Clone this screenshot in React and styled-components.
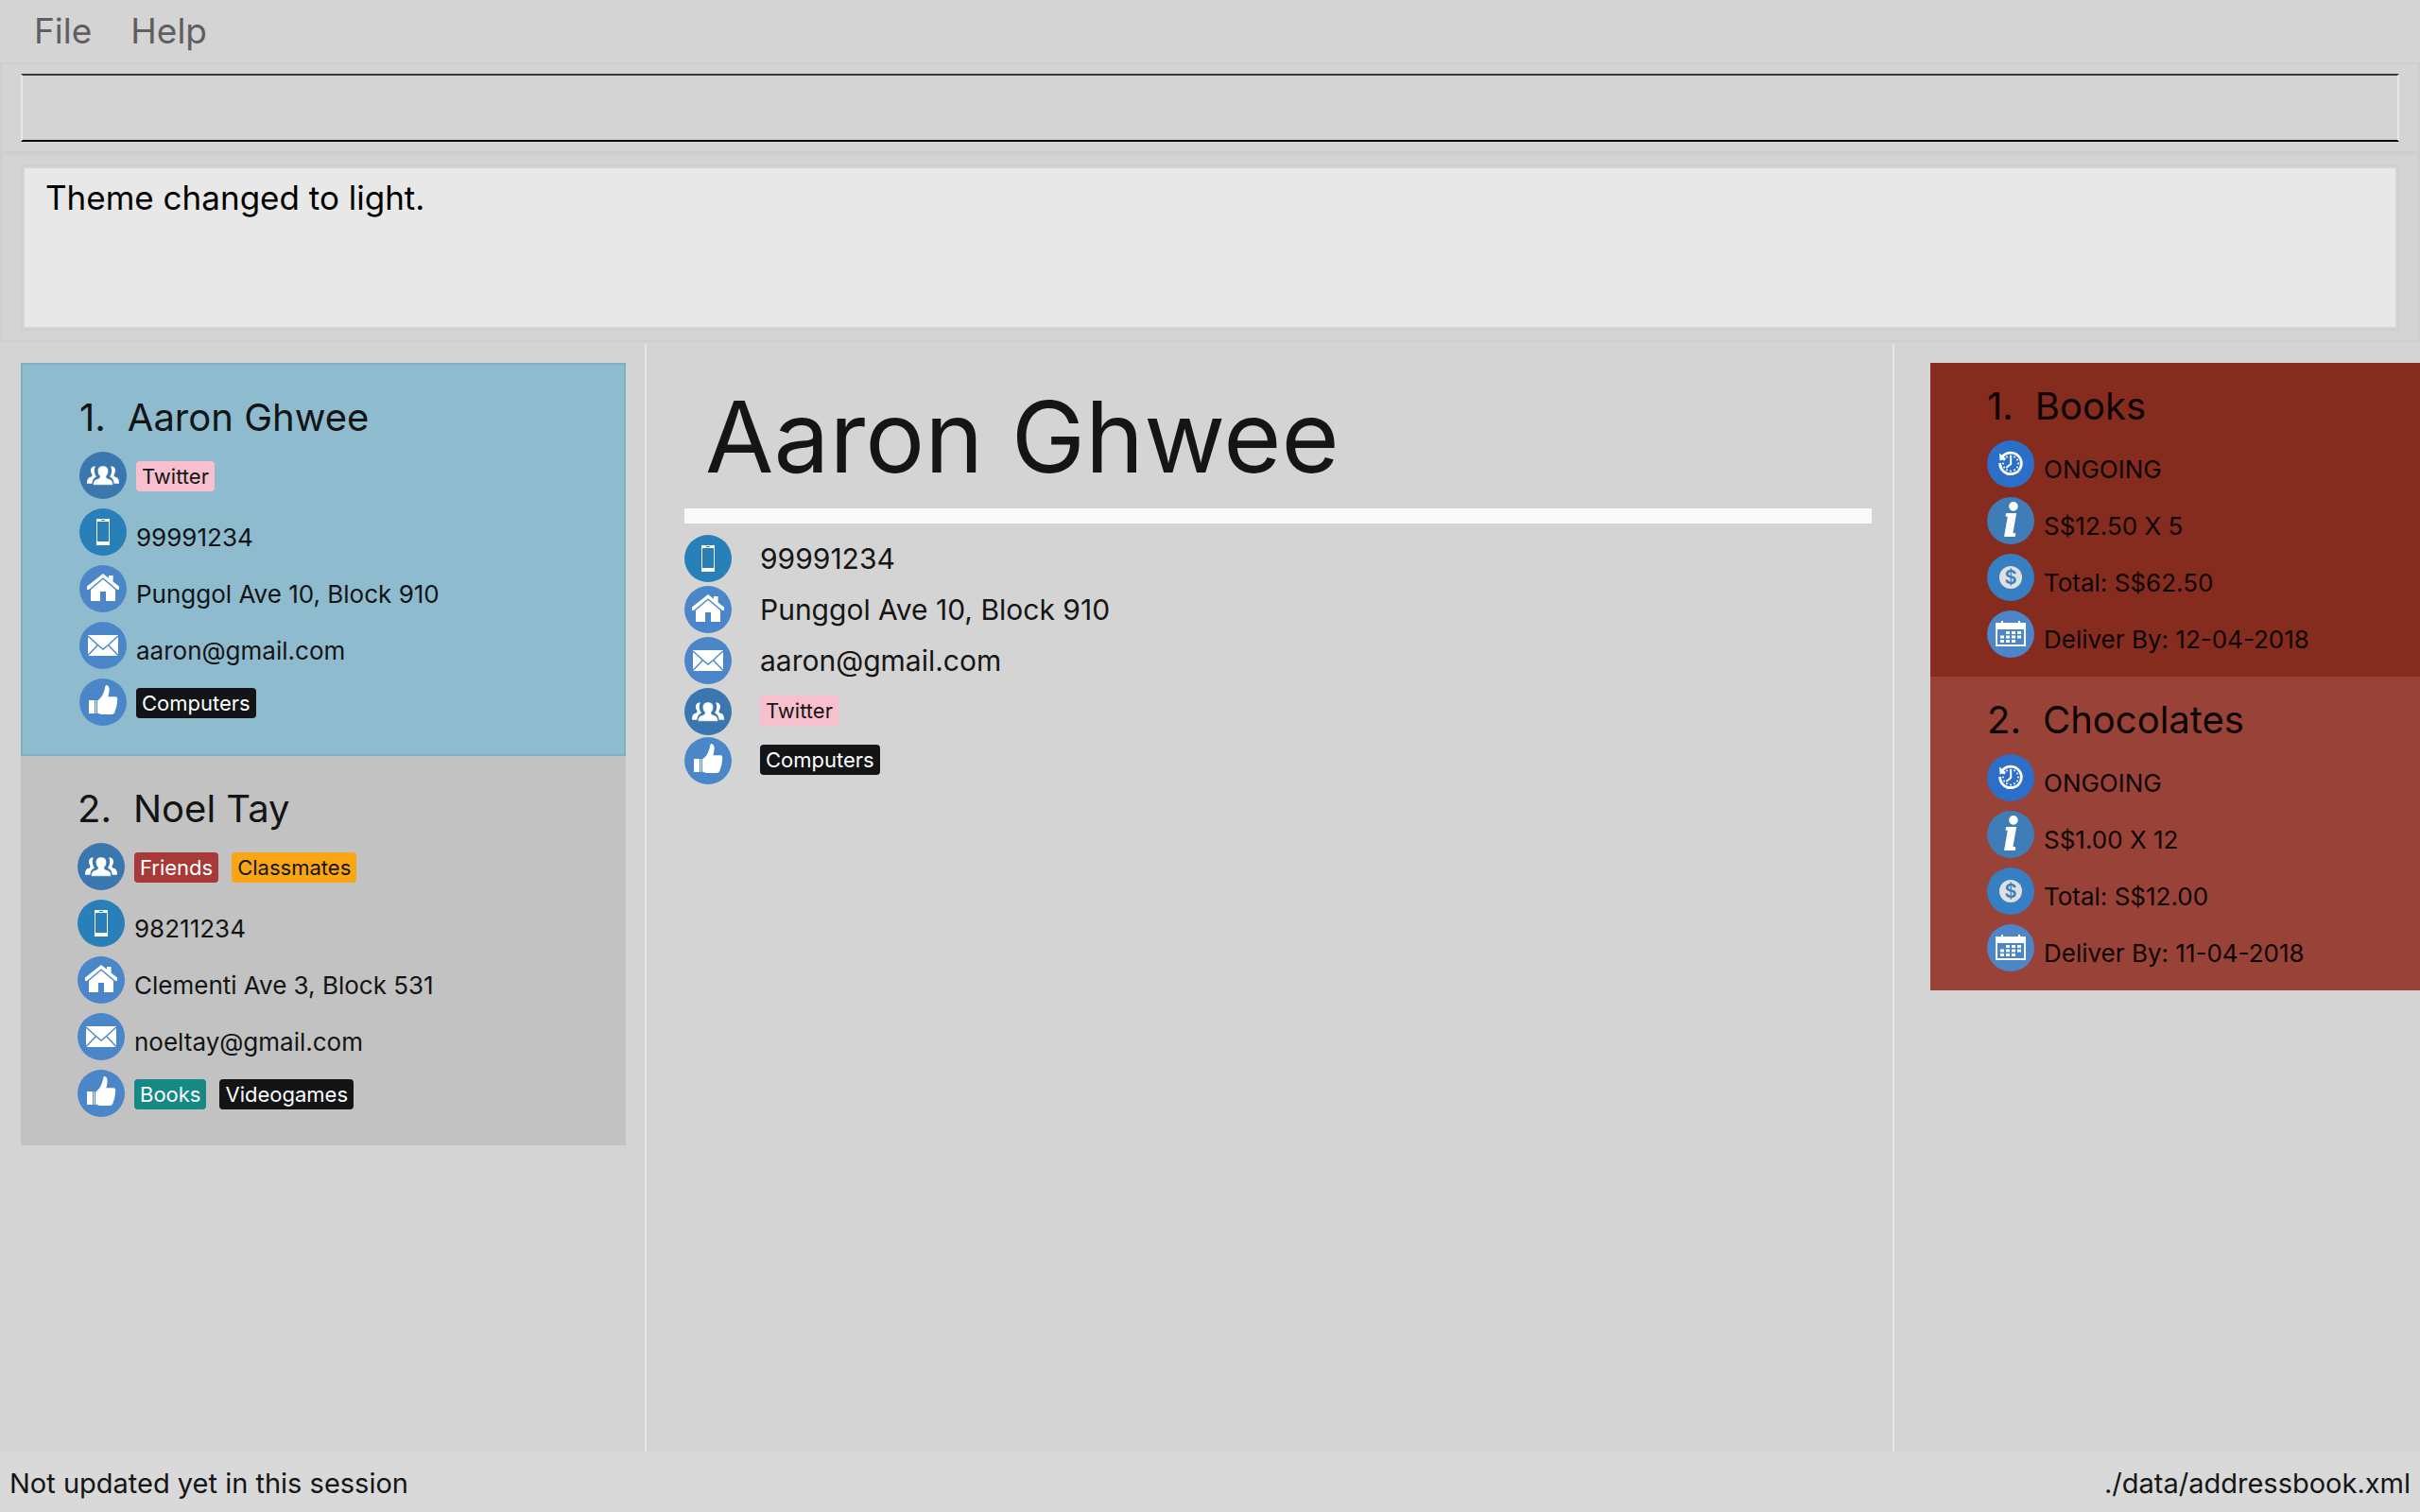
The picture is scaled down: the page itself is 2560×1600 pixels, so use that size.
import React from "react";
import styled, { createGlobalStyle } from "styled-components";

const GlobalStyle = createGlobalStyle`
  *, *::before, *::after { box-sizing: border-box; }
  body {
    margin: 0;
    background: #d4d4d4;
    color: #151515;
    font-family: Inter, "Liberation Sans", sans-serif;
  }
  button, input, textarea { font-family: inherit; }
`;

const Window = styled.div`
  display: flex;
  flex-direction: column;
  min-height: 100vh;
`;

const MenuBar = styled.nav`
  display: flex;
  gap: 41px;
  padding: 0 36px;
`;

const MenuButton = styled.button`
  padding: 0;
  border: 0;
  background: none;
  color: #5f5f5f;
  font-size: 37px;
  line-height: 66px;
`;

const Pane = styled.section`
  display: flex;
  padding: 10px 20px;
  border: 2px solid #cfcfcf;
`;

const CommandInput = styled.input`
  flex: 1;
  min-width: 0;
  height: 72px;
  padding: 0 24px;
  border: 2px solid;
  border-color: #383838 #e8e8e8 #000 #e8e8e8;
  border-radius: 0;
  outline: 0;
  background: transparent;
  font-size: 35px;
`;

const ResultBox = styled.textarea`
  flex: 1;
  min-width: 0;
  height: 176px;
  padding: 12px 24px;
  border: 2px solid #cfcfcf;
  outline: 2px solid #d4d4d4;
  outline-offset: -4px;
  border-radius: 0;
  resize: none;
  background: #e8e8e8;
  color: #000;
  font-size: 35px;
  line-height: 42px;
`;

const Main = styled.main`
  flex: 1;
  display: grid;
  grid-template-columns: minmax(0, 682fr) 2px minmax(0, 1318fr) 2px minmax(0, 556fr);
  padding-top: 2px;
`;

const Divider = styled.div`
  background: #e8e8e8;
`;

const List = styled.ul`
  margin: 0;
  padding: ${(p) => (p.$flushRight ? "20px 0 20px 38px" : "20px 20px 20px 22px")};
  list-style: none;
`;

const cardTones = {
  selected: "#8ebbce",
  plain: "#c2c2c2",
  redDark: "#852c1f",
  red: "#994237",
};

const Card = styled.li`
  display: flex;
  flex-direction: column;
  gap: 10px;
  padding: ${(p) => (p.$compact ? "20px 60px" : "30px 60px")};
  border: ${(p) => (p.$tone === "selected" ? "2px solid #80afc4" : "0")};
  background: ${(p) => cardTones[p.$tone]};
  color: ${(p) => (p.$compact ? "#0d0504" : "#121415")};
`;

const CardTitle = styled.h2`
  display: flex;
  gap: 23px;
  margin: 0;
  font-size: 40px;
  font-weight: 400;
  line-height: 52px;
  white-space: nowrap;
`;

const Fields = styled.div`
  display: flex;
  flex-direction: column;
  gap: ${(p) => p.$gap}px;
`;

const Field = styled.div`
  display: flex;
  align-items: ${(p) => (p.$wide ? "center" : "flex-end")};
  gap: ${(p) => (p.$wide ? 30 : 10)}px;
  font-size: ${(p) => (p.$wide ? 30 : 26)}px;
  line-height: 38px;
  white-space: nowrap;
`;

const Tags = styled.div`
  display: flex;
  gap: 14px;
  padding-bottom: ${(p) => (p.$wide ? 2 : 8)}px;
`;

const tagTones = {
  pink: ["#f8c0cc", "#151515"],
  black: ["#121415", "#fff"],
  red: ["#a83939", "#fff"],
  orange: ["#faa614", "#151515"],
  teal: ["#158984", "#fff"],
};

const Tag = styled.span`
  padding: 0 6px;
  border-radius: 4px;
  background: ${(p) => tagTones[p.$tone][0]};
  color: ${(p) => tagTones[p.$tone][1]};
  font-size: 22px;
  line-height: 32px;
`;

const Details = styled.article`
  padding: 38px 22px 20px 40px;
`;

const DetailsName = styled.h1`
  margin: 0;
  padding: 0 22px;
  font-size: 105px;
  font-weight: 400;
  line-height: 120px;
`;

const Rule = styled.hr`
  height: 16px;
  margin: 16px 0 12px;
  border: 0;
  background: #f9f9f9;
`;

const StatusBar = styled.footer`
  display: flex;
  justify-content: space-between;
  padding: 14px 10px 10px;
  background: #d9d9d9;
  font-size: 29px;
  line-height: 40px;
`;

const IconSvg = styled.svg`
  flex: none;
  width: 50px;
  height: 50px;
  overflow: visible;
`;

const InfoMark = styled.text`
  font-family: "Liberation Serif", serif;
  font-size: 50px;
  font-weight: 700;
  font-style: italic;
  stroke: #fff;
  stroke-width: 2px;
`;

const DollarMark = styled.text`
  font-size: 20px;
  font-weight: 600;
`;

const ticks = Array.from({ length: 12 }, (_, i) => (i * Math.PI) / 6);

const icons = {
  group: {
    disc: "#3b77af",
    art: (
      <>
        <path d="M17 15.6c-3-.6-5 1.4-5 4 0 2.200.6 3.600 1.600 4.800-.2 1.800-1 2-2.600 2.700C9 28 8 29.500 8 33.800h5.400c.2-3.800 1.400-6 4.600-7.400-2.400-3.400-3-7.600-1-10.800z" />
        <path d="M33 15.600c3-.6 5 1.400 5 4 0 2.200-.6 3.600-1.600 4.800.2 1.800 1 2 2.600 2.700 2 .9 3 2.400 3 6.700h-5.400c-.2-3.800-1.400-6-4.600-7.400 2.400-3.400 3-7.600 1-10.800z" />
        <path d="M25 15c3.600 0 5.800 2.400 5.600 5.800-.1 2.200-1 4-2.300 5.200 0 1.700.7 2.200 2.500 2.700 3.200.9 4.700 2.300 4.700 6.500h-21c0-4.200 1.500-5.600 4.700-6.500 1.800-.5 2.500-1 2.500-2.700-1.300-1.200-2.200-3-2.300-5.200C19.200 17.400 21.400 15 25 15z" stroke="#3b77af" strokeWidth="0.500" />
      </>
    ),
  },
  phone: {
    disc: "#297fb8",
    art: (
      <>
        <rect x="18" y="11" width="14" height="28" />
        <rect x="19" y="14" width="12" height="21" fill="#297fb8" />
        <rect x="23" y="12" width="4" height="1" fill="#297fb8" />
      </>
    ),
  },
  home: {
    disc: "#4a86c8",
    art: (
      <>
        <path d="M25 9l6 4.800V11h4.600v6.500L42 22.500V26h-1.800L25 13.200 9.800 26H8v-3.500z" />
        <path d="M25 15l13 11v12H28V28h-6v10H12V26z" />
      </>
    ),
  },
  mail: {
    disc: "#4a86c8",
    art: (
      <>
        <rect x="9" y="14" width="32" height="22" />
        <path d="M9 15l10.500 9.500L25 29l5.500-4.500L41 15M9 35.500l10.500-11M41 35.500l-10.500-11" fill="none" stroke="#4a86c8" strokeWidth="1.400" />
      </>
    ),
  },
  thumb: {
    disc: "#4a86c8",
    art: (
      <>
        <rect x="10" y="23" width="6" height="14" />
        <rect x="17" y="23" width="1" height="14" />
        <path d="M19 23.500c4.500-3 6.500-7 8-13.500.3-2 .8-3 1.600-3 2 .3 3 2.200 3 5 0 2.500-.6 4.800-1.200 7.300H38c1.500 0 2.400 1 2.200 2.500-.1 1 0 1.500-.4 2.500.4 1 .2 2-.3 3 .2 1.200 0 2.200-.7 3.200.1 1.300-.2 2.200-1 3-.1 3-1.300 4.400-4 4.400H24c-2 0-3.200-.9-5-1.500z" />
      </>
    ),
  },
  clock: {
    disc: "#2b6fc8",
    art: (
      <>
        <path d="M16 17.500A11.300 11.300 0 1 1 13.700 24" fill="none" stroke="#fff" strokeWidth="2.800" />
        <path d="M13 13.500l.6 8 6.600-2z" />
        {ticks.map((a) => (
          <circle key={a} cx={25 + 8 * Math.cos(a)} cy={24.400 + 8 * Math.sin(a)} r="1" />
        ))}
        <path d="M25.200 16v9l-5 4" fill="none" stroke="#fff" strokeWidth="2" />
      </>
    ),
  },
  info: {
    disc: "#3f7db8",
    art: <InfoMark x="25" y="41" textAnchor="middle">i</InfoMark>,
  },
  dollar: {
    disc: "#357fc2",
    art: (
      <>
        <circle cx="25" cy="25" r="12" fill="#e0e0e0" />
        <DollarMark x="25" y="32" textAnchor="middle" fill="#357fc2">$</DollarMark>
      </>
    ),
  },
  calendar: {
    disc: "#4a86c8",
    art: (
      <>
        <path d="M15 13v-2h2v2h16v-2h2v2h6v25H9V13zM11 20v16h28V20z" fillRule="evenodd" />
        <path d="M20 22h4v3h-4zM26 22h4v3h-4zM32 22h4v3h-4zM14 26.500h4v3h-4zM20 26.500h4v3h-4zM26 26.500h4v3h-4zM32 26.500h4v3h-4zM14 31h4v3h-4zM20 31h4v3h-4zM26 31h4v3h-4z" />
      </>
    ),
  },
};

function Icon({ name }) {
  const { disc, art } = icons[name];
  return (
    <IconSvg viewBox="0 0 50 50" aria-hidden="true">
      <circle cx="25" cy="25" r="25" fill={disc} />
      <g fill="#fff">{art}</g>
    </IconSvg>
  );
}

function FieldRow({ icon, text, tags, wide }) {
  return (
    <Field $wide={wide}>
      <Icon name={icon} />
      {text && <span>{text}</span>}
      {tags && (
        <Tags $wide={wide}>
          {tags.map(([label, tone]) => (
            <Tag key={label} $tone={tone}>{label}</Tag>
          ))}
        </Tags>
      )}
    </Field>
  );
}

const people = [
  {
    name: "Aaron Ghwee",
    tone: "selected",
    groups: [["Twitter", "pink"]],
    phone: "99991234",
    address: "Punggol Ave 10, Block 910",
    email: "aaron@gmail.com",
    likes: [["Computers", "black"]],
  },
  {
    name: "Noel Tay",
    tone: "plain",
    groups: [["Friends", "red"], ["Classmates", "orange"]],
    phone: "98211234",
    address: "Clementi Ave 3, Block 531",
    email: "noeltay@gmail.com",
    likes: [["Books", "teal"], ["Videogames", "black"]],
  },
];

const orders = [
  { name: "Books", tone: "redDark", status: "ONGOING", price: "S$12.50 X 5", total: "Total: S$62.50", due: "Deliver By: 12-04-2018" },
  { name: "Chocolates", tone: "red", status: "ONGOING", price: "S$1.00 X 12", total: "Total: S$12.00", due: "Deliver By: 11-04-2018" },
];

export default function App() {
  const current = people[0];
  return (
    <>
      <GlobalStyle />
      <Window>
        <MenuBar>
          <MenuButton type="button">File</MenuButton>
          <MenuButton type="button">Help</MenuButton>
        </MenuBar>
        <Pane>
          <CommandInput type="text" aria-label="Command" />
        </Pane>
        <Pane>
          <ResultBox readOnly aria-label="Result" value="Theme changed to light." />
        </Pane>
        <Main>
          <List>
            {people.map((p, i) => (
              <Card key={p.name} $tone={p.tone}>
                <CardTitle>
                  <span>{i + 1}.</span>
                  <span>{p.name}</span>
                </CardTitle>
                <Fields $gap={10}>
                  <FieldRow icon="group" tags={p.groups} />
                  <FieldRow icon="phone" text={p.phone} />
                  <FieldRow icon="home" text={p.address} />
                  <FieldRow icon="mail" text={p.email} />
                  <FieldRow icon="thumb" tags={p.likes} />
                </Fields>
              </Card>
            ))}
          </List>
          <Divider />
          <Details>
            <DetailsName>{current.name}</DetailsName>
            <Rule />
            <Fields $gap={4}>
              <FieldRow wide icon="phone" text={current.phone} />
              <FieldRow wide icon="home" text={current.address} />
              <FieldRow wide icon="mail" text={current.email} />
              <Fields $gap={2}>
                <FieldRow wide icon="group" tags={current.groups} />
                <FieldRow wide icon="thumb" tags={current.likes} />
              </Fields>
            </Fields>
          </Details>
          <Divider />
          <List $flushRight>
            {orders.map((o, i) => (
              <Card key={o.name} $tone={o.tone} $compact>
                <CardTitle>
                  <span>{i + 1}.</span>
                  <span>{o.name}</span>
                </CardTitle>
                <Fields $gap={10}>
                  <FieldRow icon="clock" text={o.status} />
                  <FieldRow icon="info" text={o.price} />
                  <FieldRow icon="dollar" text={o.total} />
                  <FieldRow icon="calendar" text={o.due} />
                </Fields>
              </Card>
            ))}
          </List>
        </Main>
        <StatusBar>
          <span>Not updated yet in this session</span>
          <span>./data/addressbook.xml</span>
        </StatusBar>
      </Window>
    </>
  );
}
